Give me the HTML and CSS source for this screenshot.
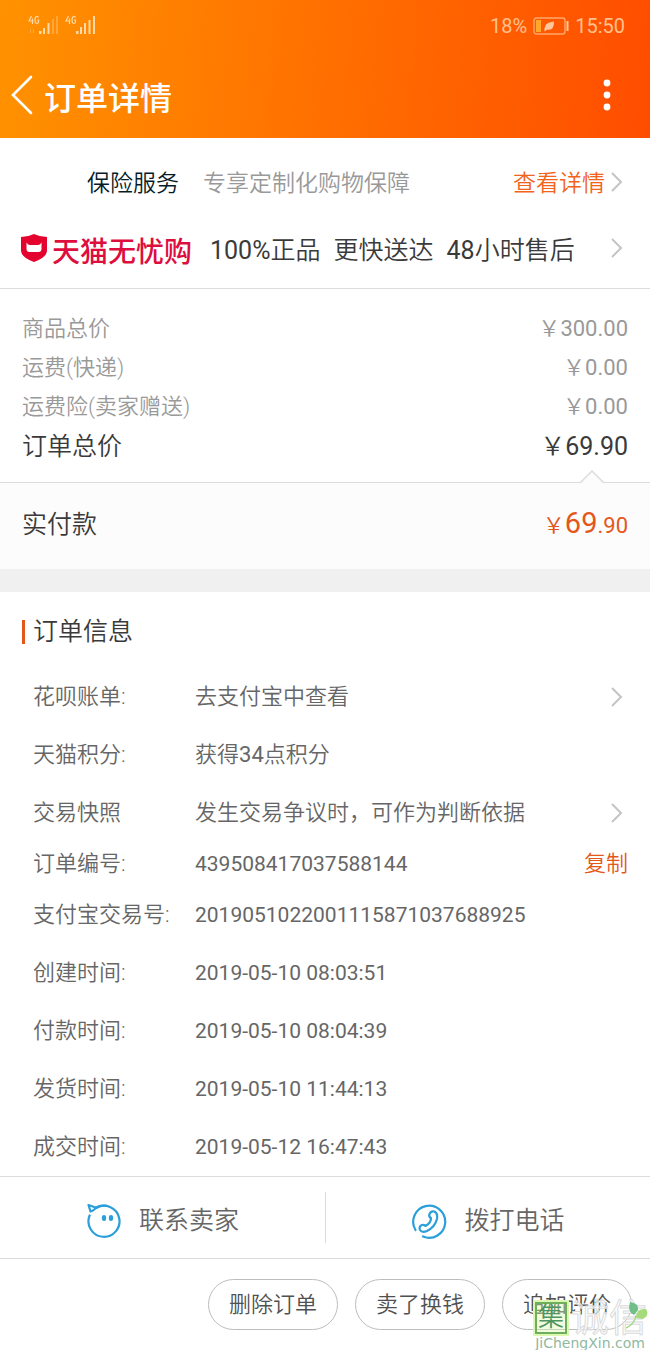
FILE: index.html
```html
<!DOCTYPE html>
<html lang="zh-CN">
<head>
<meta charset="utf-8">
<meta name="viewport" content="width=device-width, initial-scale=1">
<title>订单详情</title>
<link rel="stylesheet" href="styles.css">
</head>
<body>
<svg class="defs" aria-hidden="true">
  <symbol id="chevron" viewBox="0 0 14 22"><path d="M2 2l9 9-9 9" fill="none" stroke="currentColor" stroke-width="2"/></symbol>
</svg>
<div class="page">
  <header class="top">
    <div class="status">
      <svg class="signals" viewBox="0 0 70 22" aria-hidden="true">
        <g fill="none" stroke="#ffd9a8" stroke-width="1.2">
          <path d="M3.500 1L1 6h4.500M4.500 3.500V9M10.500 2.500Q9.500 1 8.500 1.500Q7 2 7 5T8.500 8.500Q10.500 8.500 10.500 7V5H9"/>
          <path d="M40.500 1L38 6h4.500M41.500 3.500V9M47.500 2.500Q46.500 1 45.500 1.500Q44 2 44 5T45.500 8.500Q47.500 8.500 47.500 7V5H46"/>
        </g>
        <g fill="#ffd9a8">
          <path d="M11 16h2.500v3H11zM15 13h2v6h-2zM19.500 8h2v11h-2z"/>
          <path d="M24 4h2v15h-2zM28 1h2v18h-2zM2 14h1v4H2zM5 14h1v4H5z" opacity=".35"/>
          <path d="M48 16h2.500v3H48zM52 12h2v7h-2zM56 8h2v11h-2zM60.500 5h2v14h-2zM65 1h2v18h-2z"/>
        </g>
      </svg>
      <div class="status-right">
        <span>18%</span>
        <svg class="battery" viewBox="0 0 36 18" aria-hidden="true">
          <rect x="1" y="1" width="31" height="16" rx="2.500" fill="none" stroke="#ffa76a" stroke-width="1.400"/>
          <path d="M3 3h5v12H3z" fill="#ffa62b"/>
          <path d="M11.500 14.500Q11 8 15 6Q17 5 21 4.500Q21 14 14.500 12.500Z" fill="#ffc79b"/>
          <path d="M33.500 4h2v10h-2z" fill="#ffc79b"/>
        </svg>
        <span>15:50</span>
      </div>
    </div>
    <div class="nav">
      <button class="icon-button" type="button" aria-label="返回">
        <svg class="back" viewBox="0 0 22 40"><path d="M20 2L2 20l18 18" fill="none" stroke="#fff" stroke-width="2.600" stroke-linecap="round"/></svg>
      </button>
      <h1 class="title">订单详情</h1>
      <button class="icon-button" type="button" aria-label="更多">
        <svg class="more" viewBox="0 0 8 32" fill="#fff"><circle cx="4" cy="4" r="3.400"/><circle cx="4" cy="16" r="3.400"/><circle cx="4" cy="28" r="3.400"/></svg>
      </button>
    </div>
  </header>

  <main class="content">
    <section class="services">
      <a class="insurance" href="#insurance">
        <span class="insurance-name">保险服务</span>
        <span class="insurance-text">专享定制化购物保障</span>
        <span class="insurance-link">查看详情</span>
        <svg class="chevron"><use href="#chevron"/></svg>
      </a>
      <a class="worry-free" href="#worry-free">
        <svg class="shield" viewBox="0 0 26 28" aria-hidden="true">
          <path d="M13 0Q19 3 26 3V17Q25 24 13 28Q1 24 0 17V3Q7 3 13 0Z" fill="#e4032e"/>
          <path d="M5.500 8.500Q7 11 9 11h8q2 0 3.500-2.500V15q0 3-3 3h-9q-3 0-3-3z" fill="#fff"/>
        </svg>
        <span class="brand">天猫无忧购</span>
        <span class="promises"><span><span class="digits">100%</span>正品</span><span>更快送达</span><span><span class="digits">48</span>小时售后</span></span>
        <svg class="chevron"><use href="#chevron"/></svg>
      </a>
    </section>

    <dl class="prices">
      <div class="price"><dt>商品总价</dt><dd>￥<span class="digits">300.00</span></dd></div>
      <div class="price"><dt>运费(快递)</dt><dd>￥<span class="digits">0.00</span></dd></div>
      <div class="price"><dt>运费险(卖家赠送)</dt><dd>￥<span class="digits">0.00</span></dd></div>
      <div class="price price-total"><dt>订单总价</dt><dd>￥<span class="digits">69.90</span></dd></div>
    </dl>
    <section class="paid">
      <svg class="notch" viewBox="0 0 26 14" aria-hidden="true"><path d="M1 13L13 1l12 12v1H1z" fill="#fcfcfc"/><path d="M1 13L13 1l12 12" fill="none" stroke="#dcdcdc" stroke-width="1.500"/></svg>
      <span>实付款</span>
      <span class="paid-amount">￥<strong class="paid-whole">69</strong><span class="digits">.90</span></span>
    </section>

    <section class="order">
      <h2 class="order-title">订单信息</h2>
      <dl class="info">
        <div class="row"><dt>花呗账单:</dt><dd><a class="row-link" href="#bill"><span>去支付宝中查看</span><svg class="chevron"><use href="#chevron"/></svg></a></dd></div>
        <div class="row"><dt>天猫积分:</dt><dd>获得<span class="digits">34</span>点积分</dd></div>
        <div class="row"><dt>交易快照</dt><dd><a class="row-link" href="#snapshot"><span>发生交易争议时，可作为判断依据</span><svg class="chevron"><use href="#chevron"/></svg></a></dd></div>
        <div class="row row-short"><dt>订单编号:</dt><dd class="number">439508417037588144</dd><dd class="row-action"><button class="copy" type="button">复制</button></dd></div>
        <div class="row"><dt>支付宝交易号:</dt><dd class="number">2019051022001115871037688925</dd></div>
        <div class="row"><dt>创建时间:</dt><dd class="number">2019-05-10 08:03:51</dd></div>
        <div class="row"><dt>付款时间:</dt><dd class="number">2019-05-10 08:04:39</dd></div>
        <div class="row"><dt>发货时间:</dt><dd class="number">2019-05-10 11:44:13</dd></div>
        <div class="row"><dt>成交时间:</dt><dd class="number">2019-05-12 16:47:43</dd></div>
      </dl>
    </section>

    <div class="contact">
      <button class="contact-button" type="button">
        <svg class="contact-icon" viewBox="0 0 36 36" fill="none" stroke="#2b9fd9" stroke-width="2.200" stroke-linecap="round" stroke-linejoin="round" aria-hidden="true">
          <path d="M3.600 12.500A15.500 15.500 0 1 0 10 5L7 7.500L4.500 8.500L2.500 2L9.500 4.500L14 3"/>
          <path d="M10 5A15.500 15.500 0 0 1 20 2.800"/>
          <rect x="17" y="13" width="2" height="4" rx="1" fill="#2b9fd9"/><rect x="24" y="13" width="2" height="4" rx="1" fill="#2b9fd9"/>
        </svg>
        联系卖家
      </button>
      <button class="contact-button" type="button">
        <svg class="contact-icon" viewBox="0 0 36 36" fill="none" stroke="#2b9fd9" stroke-width="2.200" stroke-linecap="round" stroke-linejoin="round" aria-hidden="true">
          <path d="M4.500 27A16 16 0 1 1 12 33.500"/>
          <path d="M20 15Q17.500 14 18.500 11Q20 7.500 23.500 8.500Q27 10.500 26 16Q24 24 16 28Q11 30 9 27Q7.500 23.500 11 22Q13 21.500 14.500 23Q20 20 20 15Z"/>
        </svg>
        拨打电话
      </button>
    </div>
  </main>

  <footer class="actions">
    <button class="pill" type="button">删除订单</button>
    <button class="pill" type="button">卖了换钱</button>
    <button class="pill" type="button">追加评价</button>
    <div class="watermark">
      <div class="watermark-name">
        <span class="watermark-seal">集</span>
        <span class="watermark-outline">诚信</span>
        <svg class="leaf" viewBox="0 0 22 30" aria-hidden="true">
          <path d="M8 15Q1 12 4 2Q13 3 12 10Z" fill="#6fbf87"/><path d="M10 18Q10 8 20 9Q24 15 17 19Z" fill="#a5db7a"/><path d="M10 15Q9 24 0 28" fill="none" stroke="#a3d98a" stroke-width="1.500"/>
        </svg>
      </div>
      <span class="watermark-site">JiChengXin.com</span>
    </div>
  </footer>
</div>
</body>
</html>
```

FILE: styles.css
```css
* { box-sizing: border-box; }

body {
  margin: 0;
  background: #fff;
  color: #3a3a3a;
  font-family: Roboto, "Noto Sans CJK SC DemiLight", "Noto Sans CJK SC", sans-serif;
  font-size: 22px;
  font-weight: 350;
  line-height: 32px;
}

h1, h2, dl, dd { margin: 0; font-weight: inherit; }
a { color: inherit; text-decoration: none; }

button {
  margin: 0;
  padding: 0;
  border: 0;
  background: none;
  color: inherit;
  font: inherit;
  cursor: pointer;
}

.defs { position: absolute; width: 0; height: 0; }
.page { display: flex; flex-direction: column; min-height: 100vh; }
.digits { font-weight: 400; }

/* Header */
.top { background: linear-gradient(95deg, #ff9200, #ff4d00); color: #fff; }

.status {
  display: flex;
  align-items: center;
  justify-content: space-between;
  height: 52px;
  padding: 0 25px 0 28px;
}

.signals { width: 70px; height: 22px; }

.status-right {
  display: flex;
  align-items: center;
  gap: 6px;
  color: #ffc08f;
  font-size: 20px;
  font-weight: 400;
}

.battery { width: 36px; height: 18px; }

.nav {
  display: flex;
  align-items: center;
  height: 86px;
  padding: 0 39px 0 11px;
}

.icon-button { display: flex; }
.back { width: 22px; height: 40px; }
.more { width: 8px; height: 32px; }

.title {
  flex: 1;
  padding: 2px 0 0 11px;
  font-family: "Noto Sans CJK SC", sans-serif;
  font-size: 32px;
  font-weight: 500;
  line-height: 48px;
}

.chevron { flex: none; width: 14px; height: 22px; margin-left: auto; color: #c4c4c4; }

/* Services */
.services { padding: 12px 26px 6px 21px; border-bottom: 1px solid #dcdcdc; }

.insurance, .worry-free { display: flex; align-items: center; }

.insurance { height: 64px; padding-left: 66px; font-size: 23px; }
.insurance-name { margin-right: 24px; color: #051b28; }
.insurance-text { color: #999; }
.insurance-link { margin-left: auto; color: #f2641c; }
.insurance-name, .insurance-text, .insurance-link { padding-top: 4px; }
.insurance .chevron { margin-left: 5px; }

.worry-free { height: 68px; font-size: 25px; }
.shield { width: 26px; height: 28px; margin-right: 5px; }

.brand {
  padding-top: 3px;
  color: #dd0d3e;
  font-family: "Noto Sans CJK SC", sans-serif;
  font-size: 28px;
  font-weight: 500;
  line-height: 40px;
}

.promises { display: flex; gap: 13px; margin-left: 18px; padding-top: 6px; }

/* Price summary */
.prices { padding: 20px 22px 15px; border-bottom: 1px solid #dcdcdc; }

.price {
  display: flex;
  align-items: center;
  justify-content: space-between;
  height: 39px;
  color: #999;
}

.price-total { height: 41px; color: #3a3a3a; font-size: 25px; }

.paid {
  position: relative;
  display: flex;
  align-items: center;
  justify-content: space-between;
  height: 86px;
  padding: 0 22px 3px;
  background: #fcfcfc;
  font-size: 25px;
}

.notch { position: absolute; top: -13px; right: 45px; width: 26px; height: 14px; }
.paid-amount { color: #e4571b; font-size: 22px; }
.paid-whole { font-size: 29px; font-weight: 400; }

/* Order information */
.order { border-top: 23px solid #f0f0f0; }

.order-title {
  display: flex;
  align-items: center;
  gap: 8px;
  height: 76px;
  padding: 4px 22px 0;
  font-size: 25px;
}

.order-title::before { content: ""; width: 3px; height: 24px; background: #e4571b; }

.info { color: #666; }

.row {
  display: grid;
  grid-template-columns: 162px 1fr auto;
  align-items: center;
  height: 58px;
  padding: 0 22px 0 33px;
}

.row-short { height: 44px; }
.row-link { display: flex; align-items: center; margin-right: 4px; }
.number { font-size: 21px; font-weight: 400; }
.copy { color: #e4571b; }

/* Contact bar */
.contact {
  display: grid;
  grid-template-columns: 1fr 1fr;
  padding: 15px 0;
  border: solid #dcdcdc;
  border-width: 1px 0;
}

.contact-button {
  display: flex;
  align-items: center;
  justify-content: center;
  gap: 17px;
  height: 51px;
  padding-top: 6px;
  color: #666;
  font-size: 25px;
}

.contact-button + .contact-button { border-left: 1px solid #dcdcdc; }
.contact-icon { width: 36px; height: 36px; }

/* Bottom actions */
.actions {
  position: relative;
  display: flex;
  flex: 1;
  align-items: flex-start;
  justify-content: flex-end;
  gap: 17px;
  padding: 20px 18px 0;
}

.pill {
  width: 130px;
  height: 51px;
  border: 1px solid #bdbdbd;
  border-radius: 26px;
  color: #505050;
}

.watermark { position: absolute; right: 0; bottom: 0; width: 120px; color: #8fb9a0; }
.watermark-name { display: flex; align-items: center; gap: 4px; padding-left: 5px; }

.watermark-seal {
  width: 32px;
  height: 32px;
  border: 2px solid #6fae5c;
  outline: 2px solid #dcf7b0;
  background: rgba(220, 247, 176, 0.4);
  color: #4f9560;
  font-size: 26px;
  font-weight: 400;
  line-height: 27px;
  text-align: center;
}

.watermark-outline {
  color: rgba(255, 255, 255, 0.7);
  font-size: 38px;
  font-weight: 500;
  line-height: 36px;
  -webkit-text-stroke: 1px #dadada;
}

.leaf { position: absolute; top: 0; right: 2px; width: 22px; height: 30px; }

.watermark-site {
  display: block;
  font-family: "DejaVu Sans", sans-serif;
  font-size: 14px;
  font-weight: 400;
  line-height: 14px;
  text-align: center;
}
```
